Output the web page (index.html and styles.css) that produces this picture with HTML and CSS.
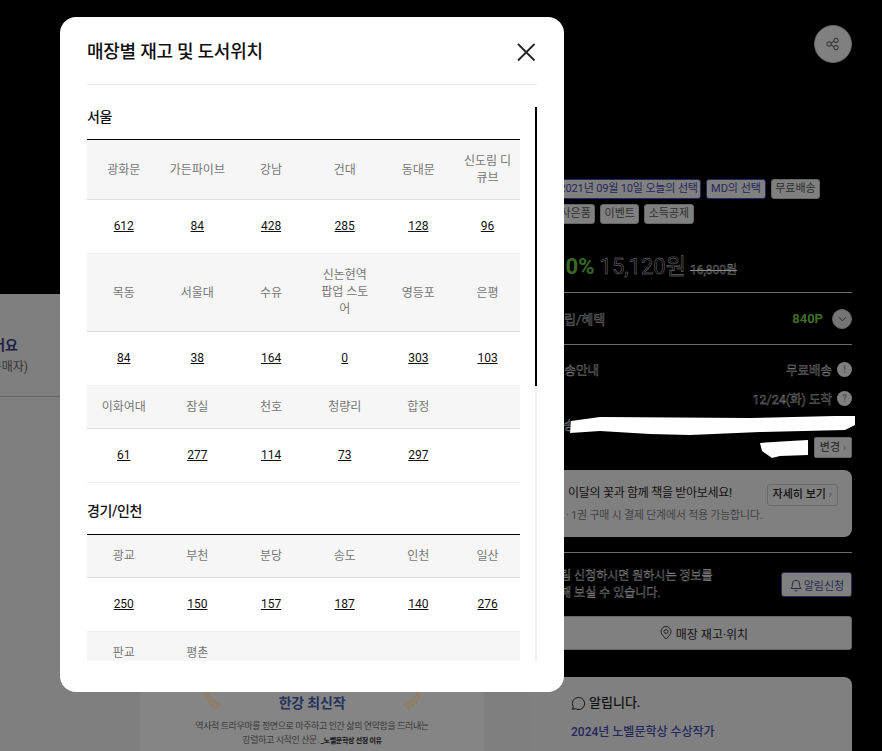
FILE: index.html
```html
<!DOCTYPE html>
<html lang="ko">
<head>
<meta charset="utf-8">
<title>매장별 재고 및 도서위치</title>
<link rel="stylesheet" href="styles.css">
</head>
<body>
<div class="page">
  <main class="left">
    <div class="hero"></div>
    <section class="review">
      <p class="review-title">이 책을 읽어요</p>
      <p class="review-sub">(최근 구매자)</p>
    </section>
    <section class="award">
      <svg class="laurel laurel-l" viewBox="0 0 18 18" width="18" height="18" fill="#a58a58" stroke="#8f7647" stroke-width="0.600"><path d="M1 0l3 1-1 3zM4 5l3 0 0 3zM7 9l3-1 1 3zM11 12l3-1 2 3z"/><path d="M0 3l3 2-3 1zM3 8l3 2-3 1zM6 12l3 1-2 2zM10 15l3 0-2 2z"/></svg>
      <svg class="laurel laurel-r" viewBox="0 0 18 18" width="18" height="18" fill="#a58a58" stroke="#8f7647" stroke-width="0.600"><path d="M17 0l-3 1 1 3zM14 5l-3 0 0 3zM11 9l-3-1-1 3zM7 12l-3-1-2 3z"/><path d="M18 3l-3 2 3 1zM15 8l-3 2 3 1zM12 12l-3 1 2 2zM8 15l-3 0 2 2z"/></svg>
      <h2 class="award-title">한강 최신작</h2>
      <p class="award-text">역사적 트라우마를 정면으로 마주하고 인간 삶의 연약함을 드러내는</p>
      <p class="award-text">강렬하고 시적인 산문. <span class="award-note">_노벨문학상 선정 이유</span></p>
    </section>
  </main>
  <aside class="right">
    <div class="share-row">
      <span class="share">
        <svg viewBox="0 0 14 14" width="14" height="14" fill="none" stroke="#2a2a2a" stroke-width="1"><circle cx="3" cy="7" r="2.200"/><circle cx="10" cy="3.400" r="2.200"/><circle cx="10" cy="10.600" r="2.200"/><path d="M5 6 8 4.400M5 8 8 9.600"/></svg>
      </span>
    </div>
    <div class="tags">
      <span class="tag tag-navy tag-date">2021년 09월 10일 오늘의 선택</span>
      <span class="tag tag-navy tag-md">MD의 선택</span>
      <span class="tag">무료배송</span>
      <span class="tag">사은품</span>
      <span class="tag">이벤트</span>
      <span class="tag">소득공제</span>
    </div>
    <div class="price">
      <span class="rate">10%</span>
      <span class="sale ghost">15,120원</span>
      <span class="list ghost">16,800원</span>
    </div>
    <div class="row row-points">
      <span class="ghost">적립/혜택</span>
      <span class="row-end"><span class="points">840P</span><span class="chev"><svg viewBox="0 0 10 6" width="9" height="6" fill="none" stroke="#222"><path d="M1 1l4 4 4-4"/></svg></span></span>
    </div>
    <div class="ship">
      <div class="ship-line">
        <span class="ghost">배송안내</span>
        <span class="row-end"><span class="ghost">무료배송</span><span class="dot">!</span></span>
      </div>
      <div class="ship-date">
        <span class="ghost">12/24(화) 도착</span><span class="dot">?</span>
      </div>
      <div class="ship-addr"><span class="ghost">배송지</span></div>
      <div class="ship-change"><span class="change">변경 <i class="caret">›</i></span></div>
    </div>
    <div class="gift">
      <div class="gift-text">
        <p class="gift-title">이달의 꽃과 함께 책을 받아보세요!</p>
        <p class="gift-sub">· 1권 구매 시 결제 단계에서 적용 가능합니다.</p>
      </div>
      <span class="more">자세히 보기 <i class="caret">›</i></span>
    </div>
    <div class="notify">
      <p class="notify-text ghost">재알림 신청하시면 원하시는 정보를<br>확인해 보실 수 있습니다.</p>
      <span class="notify-btn">
        <svg viewBox="0 0 14 14" width="14" height="14" fill="none" stroke="#2c2c50" stroke-width="1"><path d="M2 10.500h10l-1.300-2V6a3.700 3.700 0 0 0-7.400 0v2.500zM5.500 12.300c1 .9 2 .9 3 0"/></svg>
        알림신청
      </span>
    </div>
    <div class="store-btn">
      <svg viewBox="0 0 12 14" width="12" height="14" fill="none" stroke="#222" stroke-width="1"><path d="M6 13C3 10 1 7.800 1 5.500a5 5 0 0 1 10 0C11 7.800 9 10 6 13z"/><circle cx="6" cy="5.500" r="2"/></svg>
      매장 재고·위치
    </div>
    <div class="notice">
      <h3 class="notice-title">
        <svg viewBox="0 0 16 16" width="15" height="15" fill="none" stroke="#111" stroke-width="1"><path d="M8 1.500a6.500 6.500 0 1 1-3.400 12l-3 .8.800-2.800A6.500 6.500 0 0 1 8 1.500z"/><path d="M5.500 8h.01M8 8h.01M10.500 8h.01" stroke-width="1.300"/></svg>
        알립니다.
      </h3>
      <p class="notice-link">2024년 노벨문학상 수상작가</p>
    </div>
    <svg class="redact" viewBox="0 0 290 50" width="290" height="50" fill="#fff"><path d="M1 9 30 5 180 6 265 4 285 4 285 13 275 18 190 20 120 23 80 22 30 19 0 21z"/><path d="M190 31 220 29 238 28 238 43 210 44 202 46 192 39z"/></svg>
  </aside>
</div>

<div class="modal">
  <header class="modal-head">
    <h1 class="modal-title">매장별 재고 및 도서위치</h1>
    <svg class="close" viewBox="0 0 20 20" width="20" height="20" fill="none" stroke="#222" stroke-width="1.800"><path d="M2 2l16.500 16.500M18.500 2 2 18.500"/></svg>
  </header>
  <div class="modal-body">
    <div class="stores">
      <h2 class="region">서울</h2>
      <table class="stock">
        <colgroup><col class="c1"><col class="c2"><col class="c3"><col class="c4"><col class="c5"><col class="c6"></colgroup>
        <tr><th>광화문</th><th>가든파이브</th><th>강남</th><th>건대</th><th>동대문</th><th>신도림 디큐브</th></tr>
        <tr><td><a>612</a></td><td><a>84</a></td><td><a>428</a></td><td><a>285</a></td><td><a>128</a></td><td><a>96</a></td></tr>
        <tr><th>목동</th><th>서울대</th><th>수유</th><th class="th-tall">신논현역 팝업 스토어</th><th>영등포</th><th>은평</th></tr>
        <tr><td><a>84</a></td><td><a>38</a></td><td><a>164</a></td><td><a>0</a></td><td><a>303</a></td><td><a>103</a></td></tr>
        <tr><th>이화여대</th><th>잠실</th><th>천호</th><th>청량리</th><th>합정</th><th></th></tr>
        <tr><td><a>61</a></td><td><a>277</a></td><td><a>114</a></td><td><a>73</a></td><td><a>297</a></td><td></td></tr>
      </table>
      <h2 class="region region-next">경기/인천</h2>
      <table class="stock">
        <colgroup><col class="c1"><col class="c2"><col class="c3"><col class="c4"><col class="c5"><col class="c6"></colgroup>
        <tr><th>광교</th><th>부천</th><th>분당</th><th>송도</th><th>인천</th><th>일산</th></tr>
        <tr><td><a>250</a></td><td><a>150</a></td><td><a>157</a></td><td><a>187</a></td><td><a>140</a></td><td><a>276</a></td></tr>
        <tr><th>판교</th><th>평촌</th><th></th><th></th><th></th><th></th></tr>
      </table>
    </div>
    <div class="track"><div class="thumb"></div></div>
  </div>
</div>
</body>
</html>
```
FILE: styles.css
```css
* { box-sizing: border-box; }
html, body { margin: 0; height: 100%; }
body {
  width: 882px;
  height: 751px;
  overflow: hidden;
  background: #000;
  font-family: Roboto, "Noto Sans CJK KR", sans-serif;
  font-size: 12px;
  color: #111;
}
p, h1, h2, h3 { margin: 0; }
.page {
  display: grid;
  grid-template-columns: 530px 352px;
  height: 751px;
}

/* left column, dimmed page */
.left { background: #7f7f7f; overflow: hidden; display: flex; flex-direction: column; }
.hero { height: 294px; background: #000; flex: none; }
.review {
  height: 103px;
  flex: none;
  border-bottom: 1px solid #666;
  padding-top: 41px;
  margin-left: -62px;
}
.review-title { font-size: 14px; font-weight: 700; color: #1f1f45; line-height: 20px; white-space: nowrap; width: 80px; direction: rtl; }
.review-sub { font-size: 12px; color: #333; line-height: 20px; margin-top: 2px; white-space: nowrap; width: 90px; text-align: right; }
.award {
  position: relative;
  margin: 295px 46px 0 140px;
  background: #858585;
  height: 200px;
  text-align: center;
  padding-top: 2px;
  box-shadow: 0 0 30px #828282;
}
.award-title { font-size: 14px; font-weight: 700; color: #26345c; line-height: 18px; letter-spacing: -0.2px; }
.award-text { font-size: 9px; letter-spacing: -0.4px; line-height: 14px; color: #3a3a3a; margin-top: 7px; }
.award-text + .award-text { margin-top: 0; }
.award-note { font-size: 7px; letter-spacing: -0.3px; font-weight: 700; color: #111; }
.laurel { position: absolute; top: 0; }
.laurel-l { left: 65px; }
.laurel-r { right: 64px; }

/* right column, dimmed page */
.right { position: relative; padding-right: 30px; background: #000; display: flex; flex-direction: column; }
.ghost {
  color: #0a0a0a;
  -webkit-text-stroke: 0.4px #8a8a8a;
}
.share-row { display: flex; justify-content: flex-end; padding-top: 25px; height: 179px; flex: none; }
.share {
  width: 38px; height: 38px; border-radius: 50%;
  background: #808080;
  border: 1px solid #666;
  display: flex; align-items: center; justify-content: center;
}
.tags { display: flex; flex-wrap: wrap; gap: 4.700px; width: 322px; padding-left: 26px; height: 64px; align-content: flex-start; flex: none; }
.tag {
  height: 20px; line-height: 18px; padding: 0 3.500px;
  border: 1px solid #666; border-radius: 3px;
  background: #808080; color: #2e2e2e; font-size: 11px;
  white-space: nowrap;
}
.tag-navy { border-color: #26265c; color: #26265c; }
.tag-date { padding: 0 2.500px; letter-spacing: -0.15px; }
.tag-md { padding: 0 4px; }
.price { display: flex; align-items: baseline; gap: 5px; height: 49px; padding-left: 23px; padding-top: 5px; flex: none; }
.rate { font-size: 22px; font-weight: 700; color: #356a22; }
.sale { font-size: 22px; font-weight: 400; }
.list { font-size: 12px; text-decoration: line-through; margin-left: -1px; }
.row { display: flex; justify-content: space-between; align-items: center; }
.row-points { border-top: 1px solid #6c6c6c; border-bottom: 1px solid #6c6c6c; height: 53px; padding-left: 22px; font-size: 13px; flex: none; }
.row-end { display: flex; align-items: center; gap: 5px; }
.points { color: #3f6d26; font-weight: 700; font-size: 13px; margin-right: 4px; }
.chev {
  width: 20px; height: 20px; border-radius: 50%;
  background: #757575; border: 1px solid #666;
  display: flex; align-items: center; justify-content: center;
}
.ship { height: 125px; flex: none; font-size: 12.500px; }
.ship-line { display: flex; justify-content: space-between; align-items: center; height: 18px; margin-top: 15px; padding-left: 23px; }
.ship-date { display: flex; justify-content: flex-end; align-items: center; gap: 5px; height: 18px; margin-top: 11px; }
.ship-addr { height: 18px; margin-top: 8px; padding-left: 22px; }
.ship-change { display: flex; justify-content: flex-end; margin-top: 4px; }
.dot {
  width: 15px; height: 15px; border-radius: 50%;
  background: #808080; color: #555; font-size: 10px; font-weight: 700;
  display: flex; align-items: center; justify-content: center;
}
.change {
  height: 21px; width: 38px; line-height: 19px; text-align: center;
  background: #808080; border: 1px solid #666; border-radius: 2px;
  font-size: 11px; color: #222; white-space: nowrap;
}
.caret { font-style: normal; color: #555; }
.gift {
  height: 67px; flex: none;
  background: #808080; border-radius: 0 8px 8px 0;
  display: flex; justify-content: space-between; align-items: flex-start;
  padding: 14px 14px 0 38px;
}
.gift-title { font-size: 12px; line-height: 18px; letter-spacing: -0.3px; color: #111; white-space: nowrap; }
.gift-sub { font-size: 11px; line-height: 16px; letter-spacing: -0.25px; color: #444; margin-top: 6px; margin-left: -2px; white-space: nowrap; }
.more {
  height: 22px; line-height: 20px; padding: 0 5px;
  border: 1px solid #6a6a6a; border-radius: 3px;
  font-size: 11px; font-weight: 500; color: #111;
  white-space: nowrap;
}
.notify {
  margin-top: 15px; border-top: 1px solid #6c6c6c;
  height: 64px; flex: none;
  display: flex; justify-content: space-between; align-items: flex-start;
  padding-top: 15px;
}
.notify-text { font-size: 12px; line-height: 17px; padding-left: 8px; }
.notify-btn {
  margin-top: 4px;
  height: 25px; width: 71px;
  display: flex; align-items: center; justify-content: center; gap: 1px;
  background: #808080; border: 1px solid #2c2c50; border-radius: 3px;
  font-size: 11px; color: #2c2c50; white-space: nowrap;
}
.store-btn {
  height: 34px; flex: none;
  display: flex; align-items: center; justify-content: center; gap: 4px;
  background: #808080; border: 1px solid #666; border-radius: 3px;
  font-size: 12px; color: #111;
  padding-left: 26px;
}
.notice {
  margin-top: 27px; flex: 1;
  background: #808080; border-radius: 0 8px 0 0;
  padding: 17px 0 0 41px;
}
.notice-title { display: flex; align-items: center; gap: 3px; font-size: 13px; font-weight: 500; color: #111; line-height: 18px; }
.notice-link { font-size: 12px; font-weight: 500; color: #26265c; margin-top: 11px; line-height: 18px; }
.redact { position: absolute; left: 40px; top: 412px; }

/* modal */
.modal {
  position: absolute; left: 60px; top: 17px;
  width: 504px; height: 675px;
  background: #fff; border-radius: 16px;
  padding: 0 27px;
}
.modal-head {
  height: 68px;
  border-bottom: 1px solid #e8e8e8;
  display: flex; justify-content: space-between; align-items: center;
  padding-top: 2px;
}
.modal-title { font-size: 18px; font-weight: 500; color: #111; line-height: 26px; letter-spacing: -0.25px; }
.close { margin-right: 1px; margin-top: 1px; }
.modal-body { display: flex; height: 576px; overflow: hidden; }
.stores { width: 433px; flex: none; height: 576px; overflow: hidden; }
.region { font-size: 14px; font-weight: 500; letter-spacing: -0.4px; color: #111; line-height: 20px; padding-top: 22px; height: 54px; }
.region-next { height: 51px; padding-top: 18px; }
.stock { width: 433px; table-layout: fixed; border-collapse: collapse; border-top: 1px solid #000; }
.c1 { width: 73.500px; }
.c2 { width: 73.700px; }
.c3 { width: 73.700px; }
.c4 { width: 73.700px; }
.c5 { width: 73.500px; }
.c6 { width: 64.900px; }
.stock th {
  background: #f6f6f6; font-weight: 400; color: #777; font-size: 12px; line-height: 17px;
  padding: 13px 8.500px 12px; border-bottom: 1px solid #ddd; text-align: center; vertical-align: middle;
}
.stock th.th-tall { padding-bottom: 13px; }
.stock td {
  font-size: 12px; line-height: 18px; color: #111; text-align: center;
  padding: 17px 5px 18px; border-bottom: 1px solid #eee;
}
.stock a { text-decoration: underline; }
.track { width: 3px; margin-left: 15px; margin-top: 22px; background: #eee; height: 554px; flex: none; }
.thumb { width: 3px; height: 279px; background: #000; }
```
